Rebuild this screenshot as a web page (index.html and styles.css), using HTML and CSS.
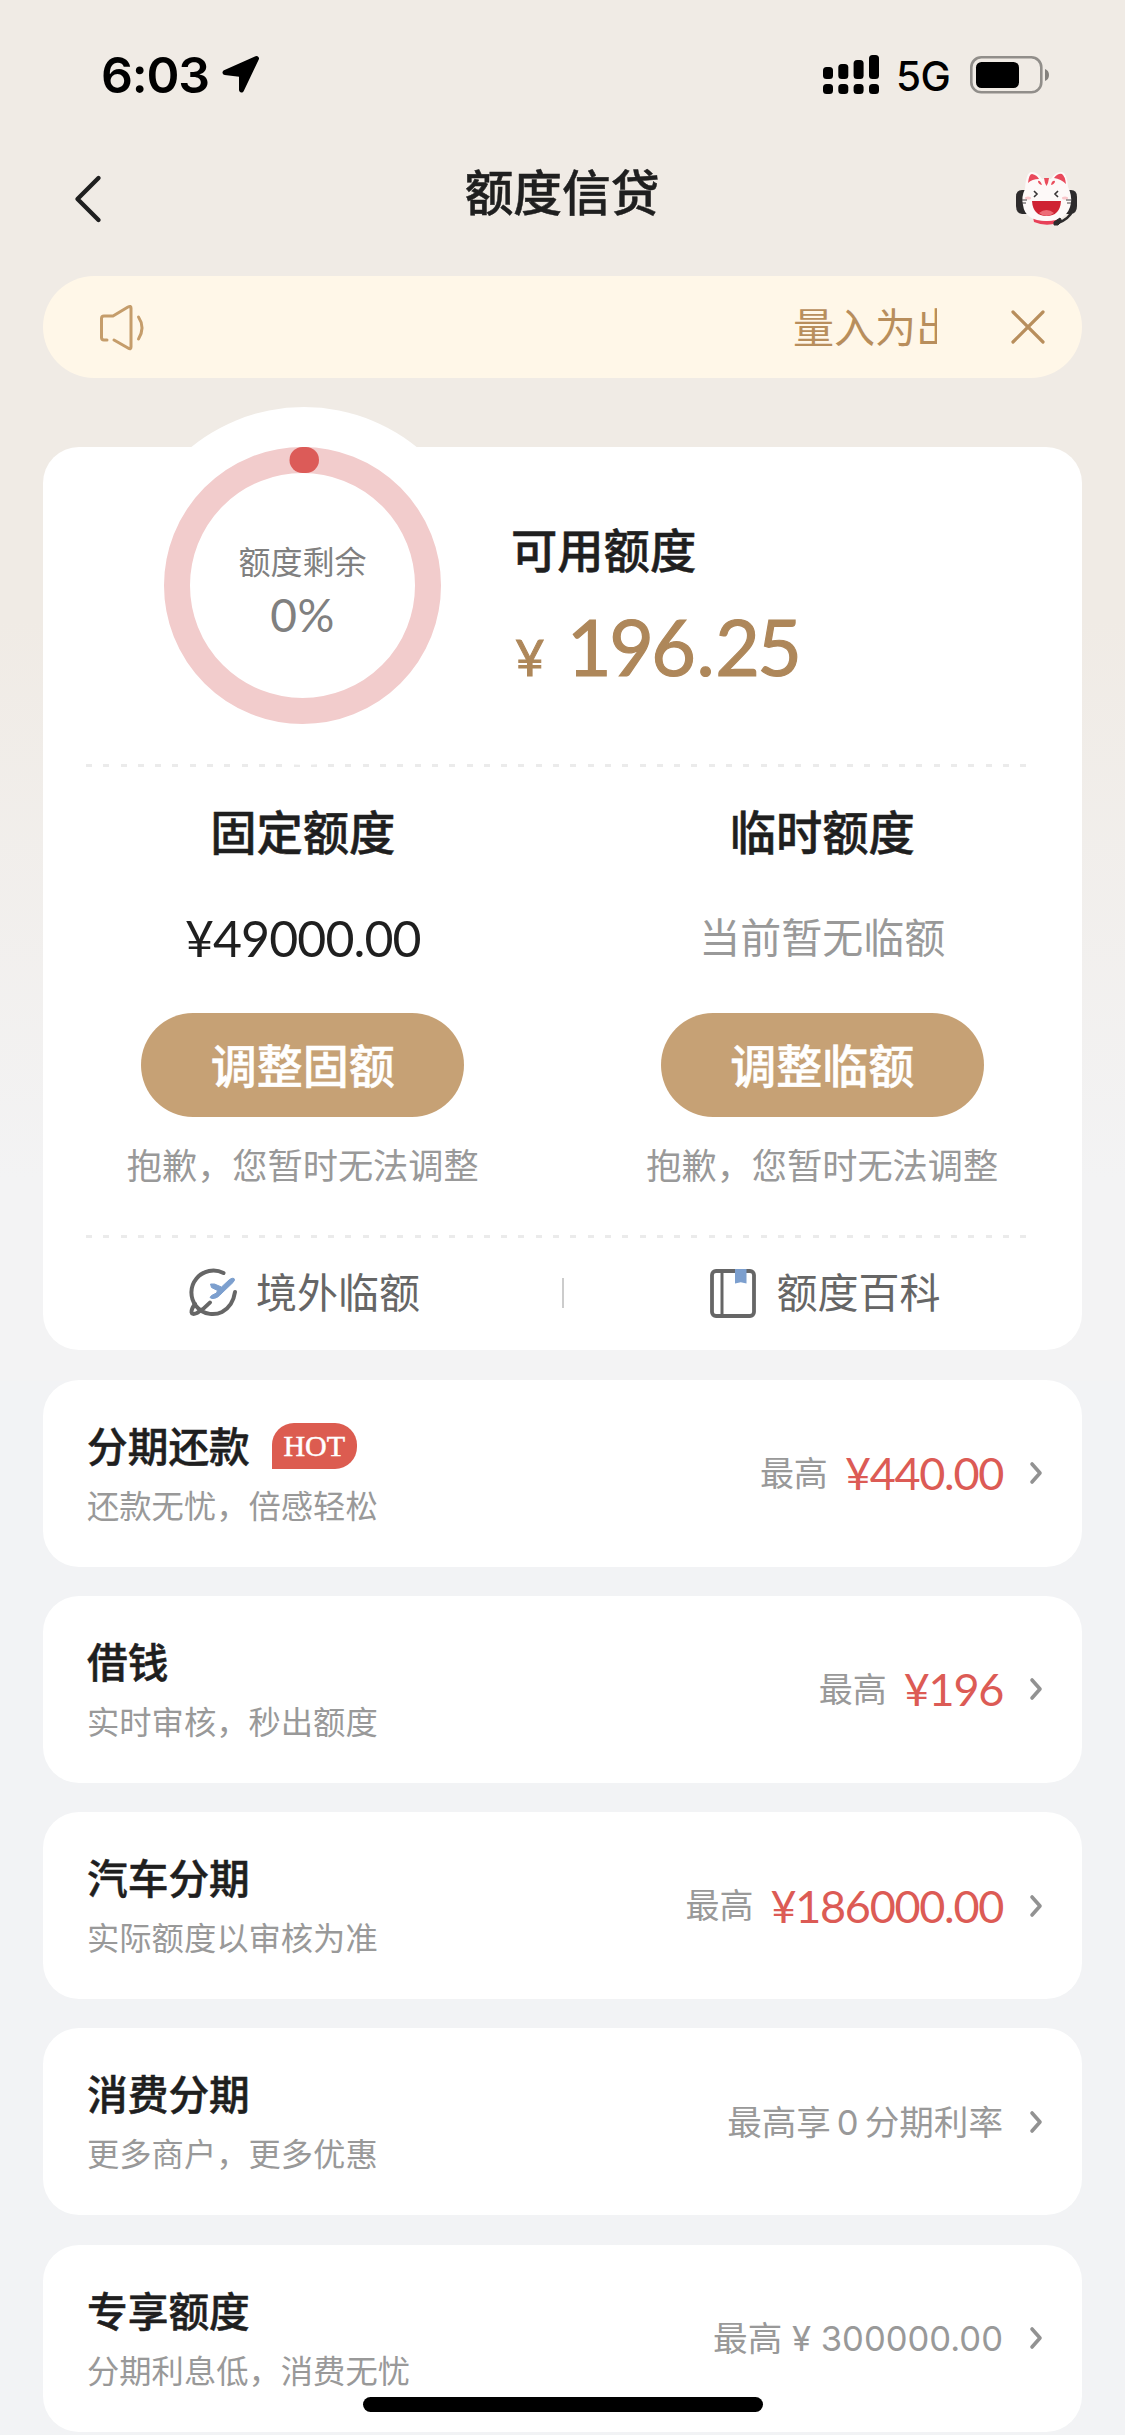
FILE: index.html
```html
<!DOCTYPE html>
<html lang="zh-CN">
<head>
<meta charset="utf-8">
<title>额度信贷</title>
<link rel="stylesheet" href="styles.css">
</head>
<body>
<div class="page">
  <div class="status">
    <span class="time">6:03</span>
    <svg class="loc" width="40" height="40" viewBox="0 0 40 40"><path d="M4 17.500 35.500 3.500 20.500 35 20.500 19.500Z" fill="#000" stroke="#000" stroke-width="5" stroke-linejoin="round"/></svg>
    <svg class="signal" width="56" height="40" viewBox="0 0 56 40"><rect x="0" y="12" width="10" height="12" rx="3.500"/><rect x="15.300" y="9" width="10" height="15" rx="3.500"/><rect x="30.600" y="5" width="10" height="19" rx="3.500"/><rect x="46" y="0" width="10" height="24" rx="3.500"/><rect x="0" y="29" width="10" height="10" rx="3.500"/><rect x="15.300" y="29" width="10" height="10" rx="3.500"/><rect x="30.600" y="29" width="10" height="10" rx="3.500"/><rect x="46" y="29" width="10" height="10" rx="3.500"/></svg>
    <span class="net">5G</span>
    <svg class="battery" width="80" height="38" viewBox="0 0 80 38"><rect x="1.300" y="1.300" width="70" height="35" rx="10" fill="none" stroke="#918e8a" stroke-width="2.600"/><rect x="6" y="6" width="43" height="26" rx="5.500"/><path d="M75 13a6.500 6.500 0 0 1 0 12z" fill="#84817d"/></svg>
  </div>

  <header class="nav">
    <svg class="back" width="30" height="52" viewBox="0 0 30 52"><path d="M25.500 5 4.500 26 25.500 47" fill="none" stroke="#1f1f1f" stroke-width="4.400" stroke-linecap="round" stroke-linejoin="round"/></svg>
    <h1>额度信贷</h1>
    <svg class="cat" width="64" height="56" viewBox="0 0 64 56">
      <path d="M1 26q0-7 6-7h6v24H7q-6-1-6-8z" fill="#2d2b2c"/><path d="M62 26q0-7-6-7h-6v24h6q6-1 6-8z" fill="#2d2b2c"/>
      <path d="M18 46q14 7 25 1l-1 5q-11 4-23-1z" fill="#e84058"/>
      <path d="M10 18Q11 2 16 1q6-1 11 7 5-1 9 0Q41 0 47 1q5 1 6 15 4 8 3 16-3 18-24.500 18T8 34q-2-8 2-16z" fill="#fdf9f8"/>
      <path d="M13 12q1-9 4-9 5 1 7 5-7 0-11 4zM39 7q4-5 8-4 3 2 4 10-5-5-12-6z" fill="#e9495b"/>
      <path d="M29 7h5l-1 5-1.500 3-1.500-3zM23 10q2-1 4 4-4-1-4-4zM40 10q-3-1-4 4 4-1 4-4z" fill="#ea4d5c"/>
      <path d="m19 20 3 3-3 3M43 20l-3 3 3 3" fill="none" stroke="#383435" stroke-width="1.600"/>
      <path d="M17 30h29q-1 15-14.500 15T17 30z" fill="#cf2333"/><path d="M24 42q7.500-6 15 0-7.500 6-15 0z" fill="#ed6c76"/>
      <ellipse cx="13" cy="27" rx="3" ry="1.500" fill="#fac7cb"/><ellipse cx="50" cy="27" rx="3" ry="1.500" fill="#fac7cb"/>
      <path d="M7 29h5M7 32h4M51 29h5M52 32h4" stroke="#454142" stroke-width="1"/>
      <path d="M58 39q-4 9-15 13" fill="none" stroke="#2d2b2c" stroke-width="2.500"/><path d="m39 51 6-4 2 3-4 4h-4z" fill="#2d2b2c" stroke="#2d2b2c"/>
    </svg>
  </header>

  <div class="notice">
    <svg class="speaker" width="50" height="48" viewBox="0 0 50 48" fill="none" stroke="#c59d6b" stroke-width="3" stroke-linecap="round" stroke-linejoin="round"><path d="M8 36H5q-2.500 0-2.500-2.500V14.500Q2.500 12 5 12H14L29 3Q32 1.500 32 4V43Q32 46 29 44L15 36M39.500 13q7 10.500 0 22"/></svg>
    <div class="marquee"><span>量入为出</span></div>
    <svg class="close" width="36" height="36" viewBox="0 0 36 36"><path d="m3 3 30 30M33 3 3 33" stroke="#b88e5c" stroke-width="3.200" stroke-linecap="round"/></svg>
  </div>

  <section class="summary">
    <div class="overview">
      <div class="ring">
        <svg class="ring-art" width="277" height="277" viewBox="0 0 277 277"><circle cx="138.500" cy="138.500" r="125.500" fill="none" stroke="#f2cccc" stroke-width="26"/><rect x="125.500" y="0" width="29.500" height="26" rx="13" fill="#dc5b58"/></svg>
        <span class="ring-label">额度剩余</span>
        <span class="ring-value num">0%</span>
      </div>
      <div class="available">
        <h2>可用额度</h2>
        <div class="money"><span class="yen">¥</span><span class="num">196<span class="point">.</span>25</span></div>
      </div>
    </div>
    <div class="dash"></div>
    <div class="columns">
      <div class="column">
        <h2>固定额度</h2>
        <p class="fixed num">¥49000.00</p>
        <button>调整固额</button>
        <p class="sorry">抱歉，您暂时无法调整</p>
      </div>
      <div class="column">
        <h2>临时额度</h2>
        <p class="none">当前暂无临额</p>
        <button>调整临额</button>
        <p class="sorry">抱歉，您暂时无法调整</p>
      </div>
    </div>
    <div class="dash"></div>
    <div class="links">
      <div class="link">
        <svg width="50" height="50" viewBox="0 0 50 50"><g fill="none" stroke="#666" stroke-width="4" stroke-linecap="round" stroke-linejoin="round"><path d="M35.500 5A22 22 0 0 0 8 38C16 48 28 47 34 44Q45 38 47 24"/><path d="M7 36C2 43 2 48 9 45Q16 41 22 34.500"/></g><path d="M22.500 16h4l7 3 8-7.500q3-2 4.500-1t-1 4L34 25q-5 6-10 5.500l-2-1 1.500-2 5-2.500 1-2.500-6-3z" fill="#7c9fce" stroke="#7c9fce"/></svg>
        <span>境外临额</span>
      </div>
      <i class="bar"></i>
      <div class="link">
        <svg width="50" height="50" viewBox="0 0 50 50"><rect x="3" y="3" width="42" height="45" rx="4" fill="none" stroke="#666" stroke-width="3.800"/><path d="M13 3v45" stroke="#666" stroke-width="3"/><path d="M26 1h11.500v14.500l-5.700-1.200L26 15.500z" fill="#7c9fce"/></svg>
        <span>额度百科</span>
      </div>
    </div>
  </section>

  <section class="list">
    <div class="item">
      <div class="text"><h3>分期还款<b class="hot">HOT</b></h3><p>还款无忧，倍感轻松</p></div>
      <span class="most">最高</span><span class="price num">¥440.00</span>
      <svg class="arrow" width="16" height="26" viewBox="0 0 16 26"><path d="m4 4 8 9-8 9"/></svg>
    </div>
    <div class="item">
      <div class="text"><h3>借钱</h3><p>实时审核，秒出额度</p></div>
      <span class="most">最高</span><span class="price num">¥196</span>
      <svg class="arrow" width="16" height="26" viewBox="0 0 16 26"><path d="m4 4 8 9-8 9"/></svg>
    </div>
    <div class="item">
      <div class="text"><h3>汽车分期</h3><p>实际额度以审核为准</p></div>
      <span class="most">最高</span><span class="price num">¥186000.00</span>
      <svg class="arrow" width="16" height="26" viewBox="0 0 16 26"><path d="m4 4 8 9-8 9"/></svg>
    </div>
    <div class="item">
      <div class="text"><h3>消费分期</h3><p>更多商户，更多优惠</p></div>
      <span class="promo">最高享<span class="latin zero">0</span>分期利率</span>
      <svg class="arrow" width="16" height="26" viewBox="0 0 16 26"><path d="m4 4 8 9-8 9"/></svg>
    </div>
    <div class="item">
      <div class="text"><h3>专享额度</h3><p>分期利息低，消费无忧</p></div>
      <span class="promo">最高<span class="latin"> ¥ 300000.00</span></span>
      <svg class="arrow" width="16" height="26" viewBox="0 0 16 26"><path d="m4 4 8 9-8 9"/></svg>
    </div>
  </section>
  <div class="home"></div>
</div>
</body>
</html>
```
FILE: styles.css
```css
* { box-sizing: border-box; margin: 0; padding: 0; }
html, body { width: 1125px; height: 2435px; overflow: hidden; }
body { font-family: "Noto Sans CJK SC", sans-serif; color: #1f1f1f; background: #f2f3f5; }
svg { display: block; flex: none; }
h1, h2, h3 { font-weight: 500; -webkit-text-stroke: 0.5px currentColor; }
.num { font-family: Lato, "Noto Sans CJK SC", sans-serif; }
.page { position: relative; height: 2435px; overflow: hidden; background: linear-gradient(#f0ebe5 0, #f0ebe5 620px, #f3f3f4 1180px, #f3f3f4 1381px, #f2f3f5 1381px); }

.status { display: flex; align-items: center; height: 150px; padding: 0 76px 0 101px; font-family: Inter, sans-serif; color: #000; }
.time { width: 120px; font-size: 50px; font-weight: 600; letter-spacing: -1.2px; }
.loc { margin-right: auto; }
.net { margin-left: 17px; width: 54px; margin-top: 2px; font-size: 40.5px; font-weight: 500; letter-spacing: -0.6px; }
.battery { margin-left: 20px; margin-right: -1px; }

.nav { display: flex; align-items: center; justify-content: space-between; height: 98px; padding: 0 46px 0 73px; }
.nav h1 { font-size: 48.7px; line-height: 60px; margin: 0 0 18px 6px; }

.notice { display: flex; align-items: center; width: 1039px; height: 102px; margin: 28px 0 0 43px; padding: 0 36px 0 56px; border-radius: 51px; background: #fff7e8; }
.speaker { margin-top: 2px; }
.marquee { flex: 1; margin-right: 73px; margin-left: 20px; height: 60px; overflow: hidden; display: flex; justify-content: flex-end; color: #b88e5c; font-size: 41px; line-height: 57px; white-space: nowrap; }
.marquee span { margin-right: -20px; }

.summary { position: relative; width: 1039px; height: 903px; margin: 69px 0 0 43px; border-radius: 36px; background: #fff; }
.summary::before { content: ""; position: absolute; left: 82px; top: -40px; width: 358px; height: 358px; border-radius: 50%; background: #fff; }
.overview { position: relative; display: flex; height: 317px; padding-left: 121px; }
.ring { display: grid; grid-template-columns: 277px; justify-items: center; align-content: start; width: 277px; height: 277px; color: #808080; }
.ring-art { grid-area: 1 / 1 / 3 / 2; }
.ring-label { grid-area: 1 / 1; align-self: end; font-size: 32px; line-height: 40px; margin-top: 93px; }
.ring-value { grid-area: 2 / 1; font-size: 46px; line-height: 50px; padding-top: 10px; height: 144px; letter-spacing: 0.5px; }
.available { margin-left: 70px; padding-top: 71px; }
h2 { font-size: 46.3px; line-height: 60px; }
.money { display: flex; align-items: baseline; color: #ae875a; margin-top: 23px; height: 90px; line-height: 90px; }
.money .num { font-size: 77px; letter-spacing: -2.5px; -webkit-text-stroke: 1.2px currentColor; }
.money .point { margin: 0 3px; }
.money .yen { width: 56px; padding-left: 4px; font-family: Lato, sans-serif; font-size: 51px; -webkit-text-stroke: 1px currentColor; }

.dash { height: 3px; margin: 0 54px 0 43px; background: repeating-linear-gradient(90deg, #ebebeb 0 6px, transparent 6px 17.3px); }
.columns { display: grid; grid-template-columns: 1fr 1fr; height: 468px; padding-top: 33px; }
.column { display: flex; flex-direction: column; align-items: center; }
.fixed, .none { height: 60px; margin-top: 46px; line-height: 60px; }
.fixed { font-size: 50px; line-height: 64px; letter-spacing: -0.9px; }
.none { font-size: 41px; line-height: 59px; color: #999; }
button { width: 323px; height: 104px; margin-top: 47px; padding-bottom: 4px; border: 0; border-radius: 52px; background: #c6a175; color: #fff; font: 500 46px "Noto Sans CJK SC", sans-serif; -webkit-text-stroke: 0.5px currentColor; }
.sorry { margin-top: 22px; font-size: 35.2px; line-height: 50px; color: #999; }
.links { display: grid; grid-template-columns: 1fr 2px 1fr; align-items: center; height: 109px; color: #666; font-size: 41px; line-height: 50px; }
.link { display: flex; gap: 18px; padding-left: 145px; }
.link span { margin-top: -3px; }
.bar { height: 30px; background: #ccc; }

.list { display: flex; flex-direction: column; gap: 29.3px; margin: 29.6px 0 0 43px; width: 1039px; }
.item { display: flex; align-items: center; height: 187px; padding: 0 38px 0 44px; border-radius: 36px; background: #fff; }
.text { flex: 1; margin-top: -4px; }
h3 { display: flex; align-items: center; gap: 22px; font-size: 40.700px; line-height: 60px; }
.hot { width: 85px; height: 46px; margin-top: 2px; border-radius: 22px 22px 22px 0; background: #dc5c50; color: #fff; font: 30px/46px "Liberation Serif", serif; text-align: center; -webkit-text-stroke: 0.5px #fff; }
.text p { font-size: 32.300px; line-height: 48px; margin-top: 5px; color: #999; }
.most { font-size: 34px; color: #999; margin-right: 17px; margin-top: -4px; }
.price { font-size: 45px; color: #dc5b55; letter-spacing: -1.3px; }
.promo { font-size: 34.600px; color: #999; margin-top: -4px; }
.latin { font-family: Inter, sans-serif; }
.zero { margin: 0 6px; }
.arrow { margin-left: 25px; fill: none; stroke: #929292; stroke-width: 3.600; stroke-linecap: round; stroke-linejoin: round; }
.home { position: absolute; left: 363px; top: 2397px; width: 400px; height: 15px; border-radius: 8px; background: #000; }
```
